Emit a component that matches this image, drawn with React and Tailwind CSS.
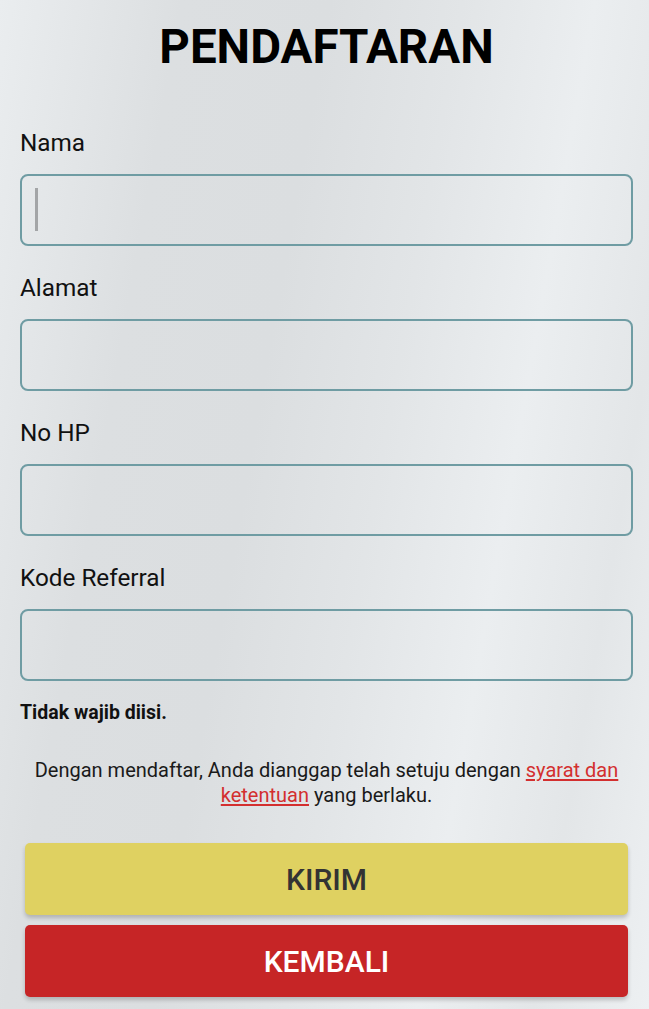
import React, { useState } from 'react';

const fields = [
  { id: 'nama', label: 'Nama' },
  { id: 'alamat', label: 'Alamat' },
  { id: 'hp', label: 'No HP' },
  { id: 'referral', label: 'Kode Referral' },
];

const App = () => {
  const [form, setForm] = useState({ nama: '', alamat: '', hp: '', referral: '' });

  const handleChange = (e) => {
    setForm({ ...form, [e.target.id]: e.target.value });
  };

  return (
    <div
      className="min-h-screen w-full pl-5 pr-4 pt-[17px] pb-3 text-[#111] bg-[linear-gradient(100deg,#eaedef_0%,#dcdfe1_22%,#dbdee0_40%,#e2e5e7_56%,#ebeef0_72%,#e3e6e8_86%,#edf0f2_100%)]"
      style={{ fontFamily: 'Roboto, "Noto Sans", sans-serif' }}
    >
      <h1 className="text-center text-[47.5px] leading-[60px] font-bold text-black">
        PENDAFTARAN
      </h1>

      <form className="mt-[51px] flex flex-col gap-[27px]" onSubmit={(e) => e.preventDefault()}>
        {fields.map((f, i) => (
          <div key={f.id} className="flex flex-col">
            <label htmlFor={f.id} className="text-[24.3px] leading-[29px] mb-[17px]">
              {f.label}
            </label>
            <div className="relative">
              <input
                id={f.id}
                type="text"
                value={form[f.id]}
                onChange={handleChange}
                className="w-full h-[72px] rounded-lg border-2 border-[#6f9ca3] bg-transparent px-4 text-[22px] outline-none caret-transparent"
              />
              {i === 0 && (
                <span className="absolute left-[15px] top-[14px] h-[43px] w-[3px] bg-[#a3a5a7]" />
              )}
            </div>
          </div>
        ))}
      </form>

      <p className="mt-[20px] text-[19.5px] leading-[24px] font-bold">Tidak wajib diisi.</p>

      <p className="mt-[33px] px-2 text-center text-[20px] leading-[25px] text-[#1a1a1a]">
        Dengan mendaftar, Anda dianggap telah setuju dengan{' '}
        <a href="#" className="text-[#d32f2f] underline underline-offset-2">
          syarat dan ketentuan
        </a>{' '}
        yang berlaku.
      </p>

      <div className="mt-[35px] px-[5px] flex flex-col gap-[10px]">
        <button
          type="submit"
          className="h-[72px] w-full rounded-[5px] bg-[#dfd161] text-[#333] text-[30px] font-medium shadow-[0_3px_4px_rgba(0,0,0,0.2)]"
        >
          KIRIM
        </button>
        <button
          type="button"
          className="h-[72px] w-full rounded-[5px] bg-[#c62526] text-white text-[30px] font-medium shadow-[0_3px_4px_rgba(0,0,0,0.2)]"
        >
          KEMBALI
        </button>
      </div>
    </div>
  );
};

export default App;
